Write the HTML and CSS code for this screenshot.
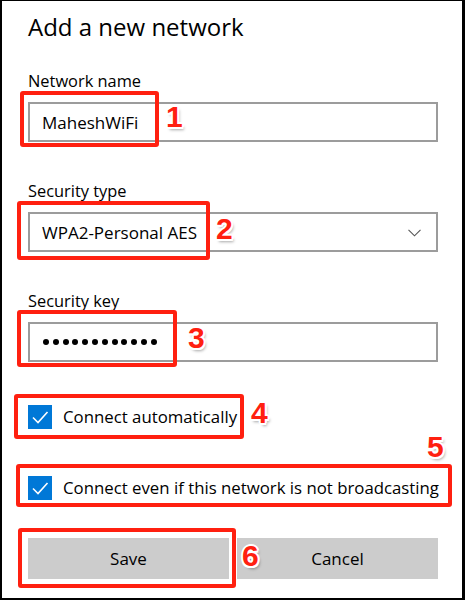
FILE: index.html
```html
<!DOCTYPE html>
<html lang="en">
<head>
<meta charset="utf-8">
<title>Add a new network</title>
<link rel="stylesheet" href="styles.css">
</head>
<body>
<div class="dialog">
  <h1 class="title">Add a new network</h1>

  <div class="field">
    <div class="label">Network name</div>
    <div class="anno">
      <div class="input">MaheshWiFi</div>
      <span class="hl hl1"></span><span class="num n1">1</span>
    </div>
  </div>

  <div class="field">
    <div class="label">Security type</div>
    <div class="anno">
      <div class="input select">
        <span>WPA2-Personal AES</span>
        <svg class="chev" width="13" height="8" viewBox="0 0 13 8"><path d="M0.5 0.8 L6.5 6.8 L12.5 0.8" fill="none" stroke="#555" stroke-width="1.1"/></svg>
      </div>
      <span class="hl hl2"></span><span class="num n2">2</span>
    </div>
  </div>

  <div class="field">
    <div class="label">Security key</div>
    <div class="anno">
      <div class="input">
        <span class="dots" aria-label="password">
          <i></i><i></i><i></i><i></i><i></i><i></i><i></i><i></i><i></i><i></i><i></i><i></i>
        </span>
      </div>
      <span class="hl hl3"></span><span class="num n3">3</span>
    </div>
  </div>

  <div class="anno check c1">
    <span class="box"><svg width="24" height="24" viewBox="0 0 24 24"><path d="M5 12.5 L10 17.5 L19.5 7" fill="none" stroke="#fff" stroke-width="1.6"/></svg></span>
    <span class="ctext">Connect automatically</span>
    <span class="hl hl4"></span><span class="num n4">4</span>
  </div>

  <div class="anno check c2">
    <span class="box"><svg width="24" height="24" viewBox="0 0 24 24"><path d="M5 12.5 L10 17.5 L19.5 7" fill="none" stroke="#fff" stroke-width="1.6"/></svg></span>
    <span class="ctext">Connect even if this network is not broadcasting</span>
    <span class="hl hl5"></span><span class="num n5">5</span>
  </div>

  <div class="anno buttons">
    <div class="btn">Save</div>
    <div class="btn">Cancel</div>
    <span class="hl hl6"></span><span class="num n6">6</span>
  </div>
</div>
</body>
</html>
```

FILE: styles.css
```css
* { box-sizing: border-box; }
html, body { margin: 0; padding: 0; background: #fff; }
.dialog {
  width: 465px;
  height: 600px;
  border-style: solid;
  border-color: #000;
  border-width: 1px 3px 2px 2px;
  padding: 10px 24px 0 26px;
  font-family: "Open Sans", "Noto Sans", sans-serif;
  color: #000;
  overflow: hidden;
}
.title {
  margin: 0;
  font-size: 24px;
  font-weight: 400;
  line-height: 32px;
}
.field { margin-top: 28px; }
.field + .field { margin-top: 39px; }
.label {
  font-size: 16.4px;
  line-height: 20px;
  margin-bottom: 11px;
}
.anno { position: relative; }
.input {
  height: 40px;
  border: 2px solid #9c9c9c;
  padding-left: 12px;
  display: flex;
  align-items: center;
  font-size: 17px;
}
.select { justify-content: space-between; padding-right: 15px; }
.chev { display: block; margin-top: 1px; }
.dots {
  display: flex;
  gap: 3.8px;
  margin-left: 1px;
}
.dots i {
  display: block;
  width: 6px;
  height: 6px;
  border-radius: 50%;
  background: #000;
}
.check {
  display: flex;
  align-items: center;
  gap: 11px;
  height: 24px;
}
.c1 { margin-top: 43px; }
.c2 { margin-top: 47px; }
.box {
  width: 24px;
  height: 24px;
  background: #0078d7;
  display: block;
}
.box svg { display: block; }
.ctext { font-size: 16.8px; line-height: 20px; white-space: nowrap; }
.buttons {
  margin-top: 38px;
  display: grid;
  grid-template-columns: 1fr 1fr;
  gap: 8px;
}
.btn {
  height: 41px;
  background: #cccccc;
  display: flex;
  align-items: center;
  justify-content: center;
  font-size: 17px;
}
.hl {
  position: absolute;
  border: 4px solid #ff2010;
  border-radius: 3px;
}
.hl1 { left: -8px; top: -11px; width: 139px; height: 56px; }
.hl2 { left: -11px; top: -11px; width: 193px; height: 59px; }
.hl3 { left: -11px; top: -12px; width: 160px; height: 57px; }
.hl4 { left: -14px; top: -11px; width: 230px; height: 45px; }
.hl5 { left: -12px; top: -12px; width: 436px; height: 43px; }
.hl6 { left: -10px; top: -10px; width: 218px; height: 60px; }
.num {
  position: absolute;
  font-family: "Liberation Sans", Arial, sans-serif;
  font-weight: 700;
  font-size: 30px;
  line-height: 30px;
  color: #ff2010;
  text-shadow:
    -1.5px -1.5px 0 #fff, 1.5px -1.5px 0 #fff, -1.5px 1.5px 0 #fff, 1.5px 1.5px 0 #fff,
    0 -2px 0 #fff, 0 2px 0 #fff, -2px 0 0 #fff, 2px 0 0 #fff,
    2px 3px 3px rgba(0,0,0,0.35);
}
.n1 { left: 138px; top: 0; }
.n2 { left: 188px; top: 2px; }
.n3 { left: 160px; top: 1px; }
.n4 { left: 223px; top: -7px; }
.n5 { left: 399px; top: -44px; }
.n6 { left: 214px; top: 3px; }
```
